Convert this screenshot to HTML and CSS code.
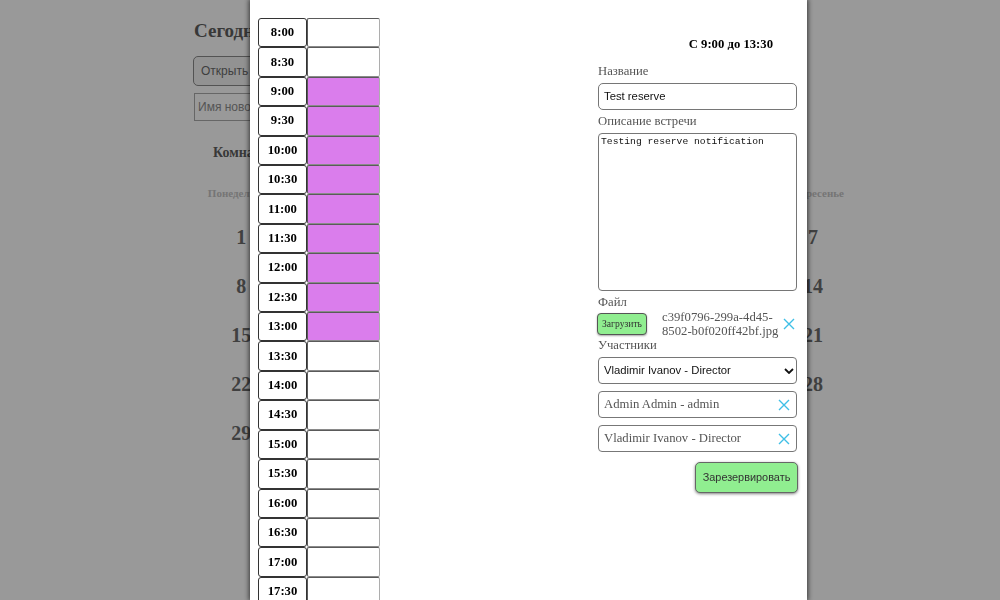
FILE: index.html
```html
<!DOCTYPE html>
<html lang="ru">
<head>
<meta charset="utf-8">
<title>Бронирование</title>
<link rel="stylesheet" href="styles.css">
</head>
<body>
<div class="page">
  <h2 class="today">Сегодня: 29 января 2024</h2>
  <button class="open-btn" type="button">Открыть таблицу бронирований</button>
  <div class="new-room"><input class="room-input" type="text" placeholder="Имя новой комнаты"></div>
  <h3 class="room-title">Комната 1</h3>
  <div class="calendar">
    <div class="wd">Понедельник</div><div class="wd">Вторник</div><div class="wd">Среда</div><div class="wd">Четверг</div><div class="wd">Пятница</div><div class="wd">Суббота</div><div class="wd">Воскресенье</div>
    <div class="day">1</div><div class="day">2</div><div class="day">3</div><div class="day">4</div><div class="day">5</div><div class="day">6</div><div class="day">7</div>
    <div class="day">8</div><div class="day">9</div><div class="day">10</div><div class="day">11</div><div class="day">12</div><div class="day">13</div><div class="day">14</div>
    <div class="day">15</div><div class="day">16</div><div class="day">17</div><div class="day">18</div><div class="day">19</div><div class="day">20</div><div class="day">21</div>
    <div class="day">22</div><div class="day">23</div><div class="day">24</div><div class="day">25</div><div class="day">26</div><div class="day">27</div><div class="day">28</div>
    <div class="day">29</div><div class="day">30</div><div class="day">31</div>
  </div>
</div>

<div class="overlay"></div>

<div class="modal">
  <div class="modal-inner">
    <h2 class="modal-title">Бронирование переговорной, 29 января</h2>
    <div class="modal-body">
      <div class="slots">
        <div class="time">8:00</div><div class="slot"></div>
        <div class="time">8:30</div><div class="slot"></div>
        <div class="time">9:00</div><div class="slot busy"></div>
        <div class="time">9:30</div><div class="slot busy"></div>
        <div class="time">10:00</div><div class="slot busy"></div>
        <div class="time">10:30</div><div class="slot busy"></div>
        <div class="time">11:00</div><div class="slot busy"></div>
        <div class="time">11:30</div><div class="slot busy"></div>
        <div class="time">12:00</div><div class="slot busy"></div>
        <div class="time">12:30</div><div class="slot busy"></div>
        <div class="time">13:00</div><div class="slot busy"></div>
        <div class="time">13:30</div><div class="slot"></div>
        <div class="time">14:00</div><div class="slot"></div>
        <div class="time">14:30</div><div class="slot"></div>
        <div class="time">15:00</div><div class="slot"></div>
        <div class="time">15:30</div><div class="slot"></div>
        <div class="time">16:00</div><div class="slot"></div>
        <div class="time">16:30</div><div class="slot"></div>
        <div class="time">17:00</div><div class="slot"></div>
        <div class="time">17:30</div><div class="slot"></div>
        <div class="time">18:00</div><div class="slot"></div>
        <div class="time">18:30</div><div class="slot"></div>
      </div>

      <form class="reserve-form">
        <div class="range">С 9:00 до 13:30</div>
        <label class="label">Название</label>
        <input class="text-input" type="text" value="Test reserve">
        <label class="label">Описание встречи</label>
        <textarea class="desc">Testing reserve notification</textarea>
        <label class="label label-file">Файл</label>
        <div class="file-row">
          <button class="upload-btn" type="button">Загрузить</button>
          <span class="filename">c39f0796-299a-4d45-8502-b0f020ff42bf.jpg</span>
          <svg class="x-icon file-x" viewBox="0 0 12 12" width="12" height="12"><path d="M1 1L11 11M11 1L1 11"/></svg>
        </div>
        <label class="label label-members">Участники</label>
        <div class="select-wrap">
          <select class="member-select">
            <option>Vladimir Ivanov - Director</option>
            <option>Admin Admin - admin</option>
          </select>
          <svg class="chevron" viewBox="0 0 10 6" width="10" height="6"><path d="M1 1L5 5L9 1"/></svg>
        </div>
        <div class="chip chip-first"><span>Admin Admin - admin</span><svg class="x-icon" viewBox="0 0 12 12" width="12" height="12"><path d="M1 1L11 11M11 1L1 11"/></svg></div>
        <div class="chip"><span>Vladimir Ivanov - Director</span><svg class="x-icon" viewBox="0 0 12 12" width="12" height="12"><path d="M1 1L11 11M11 1L1 11"/></svg></div>
        <button class="submit-btn" type="button">Зарезервировать</button>
      </form>
    </div>
  </div>
</div>
</body>
</html>
```

FILE: styles.css
```css
html, body {
  margin: 0;
  height: 100%;
  overflow: hidden;
}
body {
  background: #fff;
  font-family: "Liberation Serif", "Times New Roman", serif;
}

/* background page */
.page {
  width: 612px;
  margin: 0 auto;
  padding-top: 20px;
}
.today {
  margin: 0;
  font-size: 19px;
  line-height: 22px;
  font-weight: bold;
  color: #5e5e5e;
}
.open-btn {
  display: block;
  margin-top: 14px;
  height: 30px;
  width: 200px;
  margin-left: -1px;
  padding: 0 7px;
  text-align: left;
  background: #f4f4f4;
  border: 1px solid #8a8a8a;
  border-radius: 5px;
  font: 12px "Liberation Sans", Arial, sans-serif;
  color: #6a6a6a;
}
.new-room {
  margin-top: 7px;
}
.room-input {
  box-sizing: border-box;
  height: 28px;
  width: 200px;
  border: 1px solid #aaa;
  padding: 0 3px;
  font: 12px "Liberation Sans", Arial, sans-serif;
  background: #fff;
}
.room-input::placeholder {
  color: #8e8e8e;
}
.room-title {
  margin: 24px 0 0 19px;
  font-size: 14px;
  line-height: 16px;
  font-weight: bold;
  color: #5e5e5e;
}
.calendar {
  margin-left: -0.5px;
  margin-top: 14px;
  display: grid;
  grid-template-columns: repeat(7, 95.3px);
  grid-template-rows: 26px;
  grid-auto-rows: 49px;
  align-items: center;
  justify-items: center;
}
.wd {
  font-size: 11px;
  font-weight: bold;
  color: #c4c4c4;
  margin-bottom: -10px;
}
.day {
  font-size: 20px;
  font-weight: bold;
  color: #6c6c6c;
  padding-top: 23px;
}

/* overlay */
.overlay {
  position: fixed;
  inset: 0;
  background: rgba(0, 0, 0, 0.4);
}

/* modal */
.modal {
  position: fixed;
  top: 0;
  bottom: 0;
  left: 250px;
  width: 557px;
  background: #fff;
  box-shadow: 0 0 5px 1px rgba(0, 0, 0, 0.65);
  overflow: hidden;
}
.modal-inner {
  margin-top: -27.5px;
  padding: 0 10px 0 8px;
}
.modal-title {
  margin: 0 0 15.5px;
  font-size: 20px;
  line-height: 30px;
  font-weight: bold;
  text-align: center;
  color: #000;
}
.modal-body {
  display: flex;
  align-items: flex-start;
}

.slots {
  display: grid;
  grid-template-columns: 49px 73px;
  grid-auto-rows: 29.42px;
}
.time {
  box-sizing: border-box;
  border: 1px solid #333;
  border-radius: 3px;
  display: flex;
  align-items: center;
  justify-content: center;
  font-size: 12.7px;
  font-weight: bold;
  color: #000;
  background: #fff;
}
.slot {
  box-sizing: border-box;
  border: 1px solid;
  border-color: #5a5a5a #adadad #8a8a8a #5a5a5a;
  border-radius: 2px;
  background: #fff;
}
.slot.busy {
  background: #da7dec;
}

/* form */
.reserve-form {
  width: 199px;
  margin-left: auto;
  padding-top: 18.5px;
  display: flex;
  flex-direction: column;
  font-size: 12.7px;
  color: #555;
}
.range {
  font-weight: bold;
  color: #000;
  text-align: right;
  padding-right: 24px;
  line-height: 15px;
  margin-bottom: 8px;
}
.label {
  display: block;
  line-height: 15px;
  margin: 4px 0;
}
.label-file {
  margin-bottom: 0;
}
.label-members {
  margin-top: 0;
}
.text-input {
  box-sizing: border-box;
  height: 27px;
  width: 199px;
  border: 1px solid #767676;
  border-radius: 5px;
  padding: 0 5px;
  font: 11.3px "Liberation Sans", Arial, sans-serif;
  color: #111;
}
.desc {
  box-sizing: border-box;
  height: 158px;
  width: 199px;
  border: 1px solid #767676;
  border-radius: 4px;
  padding: 2px 2px;
  font: 9.7px/11px "Liberation Mono", "Courier New", monospace;
  color: #111;
  resize: none;
}
.file-row {
  display: flex;
  align-items: center;
  height: 28px;
}
.upload-btn {
  box-sizing: border-box;
  width: 50px;
  height: 22px;
  margin-left: -1px;
  padding: 0;
  background: #90ee90;
  border: 1px solid #555;
  border-radius: 4px;
  box-shadow: 0 1px 2px rgba(0, 0, 0, 0.35);
  font: 9.6px "Liberation Serif", "Times New Roman", serif;
  color: #333;
}
.filename {
  margin-left: 15px;
  width: 120px;
  line-height: 14px;
  color: #555;
}
.x-icon {
  fill: none;
  stroke: #3fbfe6;
  stroke-width: 1.4;
  flex: none;
}
.file-x {
  margin-left: auto;
  margin-right: 2px;
}
.select-wrap {
  position: relative;
}
.member-select {
  box-sizing: border-box;
  -webkit-appearance: none;
  appearance: none;
  display: block;
  height: 27px;
  width: 199px;
  border: 1px solid #767676;
  border-radius: 4px;
  padding: 0 5px;
  background: #fff;
  font: 11.3px "Liberation Sans", Arial, sans-serif;
  color: #111;
}
.chevron {
  position: absolute;
  right: 3px;
  top: 11px;
  fill: none;
  stroke: #111;
  stroke-width: 1.8;
}
.chip {
  box-sizing: border-box;
  height: 27px;
  display: flex;
  align-items: center;
  justify-content: space-between;
  border: 1px solid #777;
  border-radius: 4px;
  padding: 0 6px 0 5px;
  margin-top: 7px;
  color: #555;
}
.chip-first {
  margin-top: 7.5px;
}
.submit-btn {
  align-self: flex-end;
  margin-top: 9.5px;
  margin-right: -1px;
  box-sizing: border-box;
  width: 103px;
  height: 31px;
  padding: 0;
  background: #90ee90;
  border: 1px solid #666;
  border-radius: 5px;
  box-shadow: 0 1px 3px rgba(0, 0, 0, 0.5);
  font: 10.9px "Liberation Sans", Arial, sans-serif;
  color: #333;
}
```
